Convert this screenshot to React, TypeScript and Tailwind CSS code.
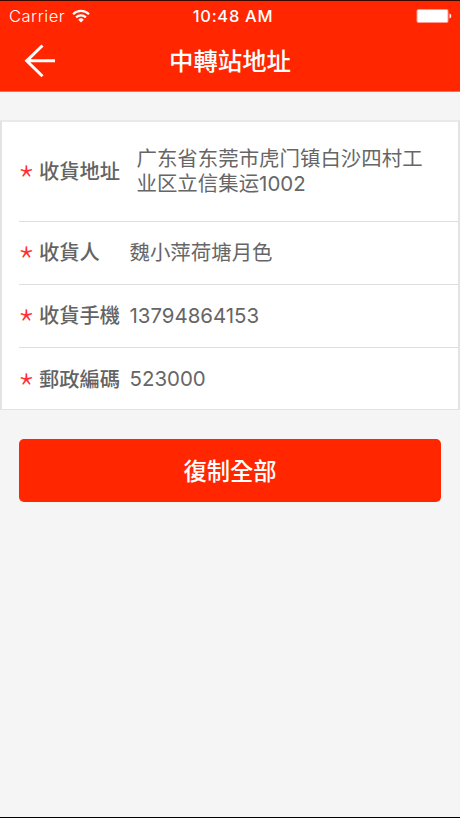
import React from 'react';

const rows = [
  { label: '收貨地址', value: '广东省东莞市虎门镇白沙四村工业区立信集运1002', multiline: true },
  { label: '收貨人', value: '魏小萍荷塘月色' },
  { label: '收貨手機', value: '13794864153' },
  { label: '郵政編碼', value: '523000' },
];

function StatusBar() {
  return (
    <div className="h-[30px] grid grid-cols-3 items-center pl-[9px] pr-[8px] text-white text-[16.5px] leading-[30px]">
      <div className="flex items-center gap-[7px] font-light tracking-[0.5px]">
        <span>Carrier</span>
        <svg className="w-[18px] h-[14px]" viewBox="0 0 18 14" fill="none" stroke="white" strokeWidth="2.2">
          <path d="M1 5.2a11.5 11.5 0 0 1 16 0" />
          <path d="M4.1 8.4a7 7 0 0 1 9.8 0" />
          <path d="M9 13.6L6.2 10.7a4 4 0 0 1 5.6 0z" fill="white" stroke="none" />
        </svg>
      </div>
      <span className="pl-[5px] text-center font-medium tracking-[0.7px]">10:48 AM</span>
      <svg className="w-[36px] h-[16px] justify-self-end" viewBox="0 0 36 16">
        <rect x="0.5" y="1" width="32" height="14" rx="2" fill="#ff9a94" />
        <rect x="1.5" y="2" width="30" height="12" rx="1" fill="white" />
        <path d="M33.5 5.5c2.4 0.8 2.4 4.2 0 5z" fill="white" />
      </svg>
    </div>
  );
}

function Header() {
  return (
    <header className="h-[92px] bg-[#ff2600] border-t border-[#3a0800] border-b border-b-[#c98378]">
      <StatusBar />
      <div className="h-[60px] grid grid-cols-[80px_1fr_80px] items-center">
        <button className="ml-[24px] w-[32px] h-[34px]" aria-label="Back">
          <svg className="w-[32px] h-[34px]" viewBox="0 0 32 34" fill="none" stroke="white" strokeWidth="3">
            <path d="M18.5 1.5L2.7 16.8l15.8 15.4M3 16.8h28" />
          </svg>
        </button>
        <h1 className="text-center text-white text-[24.4px] font-medium leading-none">中轉站地址</h1>
      </div>
    </header>
  );
}

export default function App() {
  return (
    <div className="w-[460px] h-[818px] flex flex-col bg-[#f5f5f5] border-b border-black font-['Inter','Noto_Sans_CJK_TC',sans-serif]">
      <Header />

      {/* Address card */}
      <section className="mt-[28px] h-[290px] pl-[17px] bg-white border-2 border-[#e3e3e3] border-t-[#e9e9e9] border-b-[1px]">
        {rows.map((row) => (
          <div
            key={row.label}
            className={`flex items-center border-b border-[#dedede] last:border-b-0 ${row.multiline ? 'h-[100px]' : 'h-[63px]'}`}
          >
            <span className="w-[20px] pt-[18px] -indent-[2px] text-[44px] leading-none font-thin text-[#ff3030] font-['Noto_Sans_CJK_TC',sans-serif]">*</span>
            <span className={`pt-px text-[20.3px] leading-none font-medium text-[#636363] whitespace-nowrap ${row.multiline ? 'w-[97.5px]' : 'w-[90.5px]'}`}>
              {row.label}
            </span>
            <span className="w-[292px] text-[20.45px] leading-[24.5px] text-[#666666] font-[380] font-['Inter','Noto_Sans_CJK_SC',sans-serif]">
              {row.value}
            </span>
          </div>
        ))}
      </section>

      <button className="mt-[29px] ml-[19px] w-[422px] h-[63px] pt-[2px] rounded-[5px] bg-[#ff2600] text-white text-[23.3px] font-medium leading-none">
        復制全部
      </button>
    </div>
  );
}
